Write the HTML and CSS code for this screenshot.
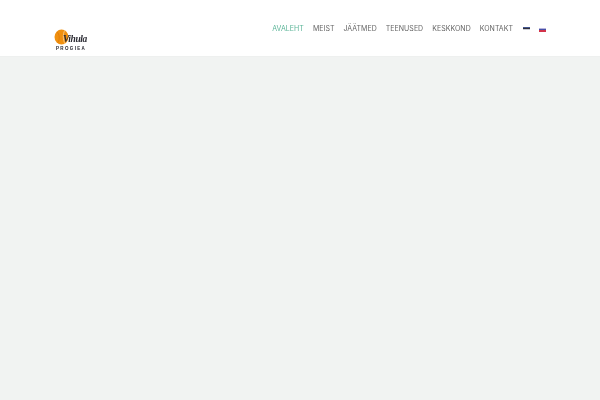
FILE: index.html
```html
<!DOCTYPE html>
<html lang="et">
<head>
<meta charset="utf-8">
<title>Vihula Progiea</title>
<link rel="stylesheet" href="styles.css">
</head>
<body>
<header class="site-header">
  <a class="logo" href="#">
    <svg class="logo-sun" width="15" height="16" viewBox="0 0 15 16" aria-hidden="true">
      <ellipse cx="7.500" cy="8" rx="7" ry="7.500" fill="#f0900f"/>
      <path d="M11 1C8.500 5 9 11 11 15" stroke="#f9c680" stroke-width="1" fill="none"/>
      <path d="M3 3C5.500 5 6 10 4 13.500" stroke="#e27d0a" stroke-width="1" fill="none"/>
    </svg>
    <span class="logo-script">Vihula</span>
    <span class="logo-word">PROGIEA</span>
  </a>
  <nav class="main-nav">
    <a class="nav-link active" href="#">AVALEHT</a>
    <a class="nav-link" href="#">MEIST</a>
    <a class="nav-link" href="#">JÄÄTMED</a>
    <a class="nav-link" href="#">TEENUSED</a>
    <a class="nav-link" href="#">KESKKOND</a>
    <a class="nav-link" href="#">KONTAKT</a>
    <span class="flags">
      <span class="flag flag-et"></span>
      <span class="flag flag-ru"></span>
    </span>
  </nav>
</header>
<main class="content"></main>
</body>
</html>
```
FILE: styles.css
```css
* { box-sizing: border-box; }
html, body { height: 100%; }
body {
  margin: 0;
  display: flex;
  flex-direction: column;
  background: #f1f3f2;
  font-family: "Inter", "Liberation Sans", sans-serif;
}
.site-header {
  height: 56px;
  flex: none;
  background: #fff;
  box-shadow: 0 1px 1px rgba(0, 0, 0, 0.01);
  display: flex;
  justify-content: space-between;
  padding: 0 54px;
}
.logo {
  position: relative;
  display: block;
  width: 32px;
  height: 24px;
  margin-top: 29px;
  color: #222;
  text-decoration: none;
  filter: blur(0.3px);
}
.logo-sun { display: block; }
.logo-script {
  position: absolute;
  left: 9px;
  top: 5px;
  font: italic 700 9.500px/11px "Liberation Serif", serif;
  letter-spacing: -0.45px;
  color: #2b2b33;
}
.logo-word {
  position: absolute;
  left: 2px;
  top: 17px;
  font: 700 4.500px/5px "Liberation Sans", sans-serif;
  letter-spacing: 1.35px;
  color: #1c1c24;
  white-space: nowrap;
}
.main-nav {
  display: flex;
  align-items: flex-start;
  gap: 9px;
  padding-top: 24px;
  filter: blur(0.25px);
}
.nav-link {
  font-size: 7px;
  line-height: 9px;
  letter-spacing: 0.03px;
  color: #666;
  text-decoration: none;
  white-space: nowrap;
}
.nav-link.active { color: #5cb598; }
.flags {
  display: flex;
  gap: 9px;
  margin-left: 1px;
  padding-top: 3px;
}
.flag { display: block; width: 7px; height: 3px; }
.flag-et { background: linear-gradient(#44578f 34%, #30303c 34% 67%, #c9ccd6 67%); }
.flag-ru {
  height: 4px;
  margin-top: 1px;
  background: linear-gradient(#b9b5dc 25%, #4650a8 25% 60%, #d2334a 60%);
}
.content { flex: 1; }
```
